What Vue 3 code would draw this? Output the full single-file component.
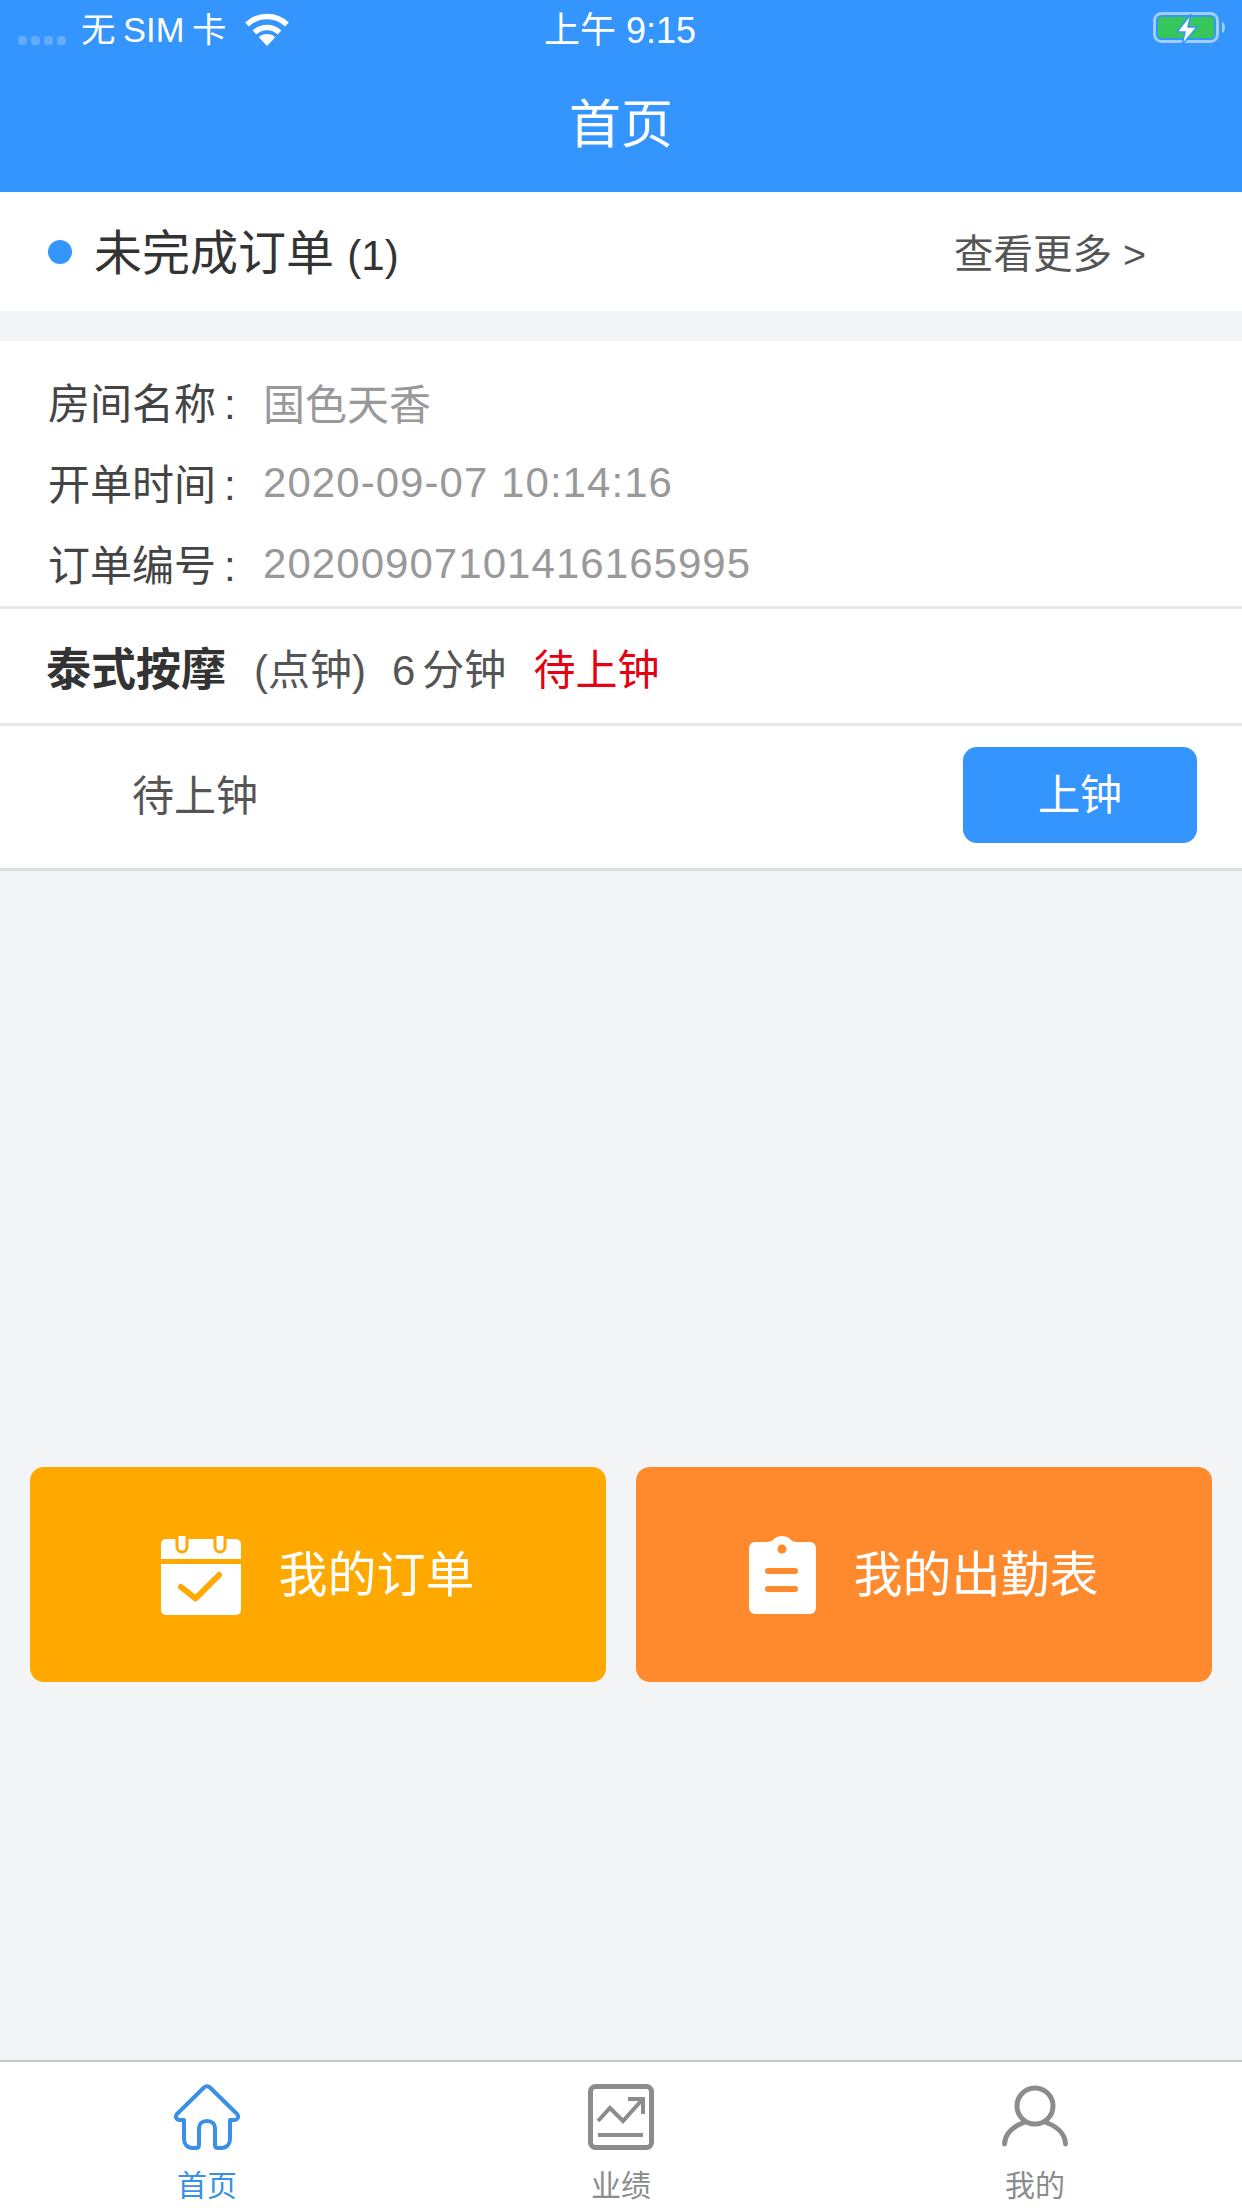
<template>
  <div class="page">
    <header class="top">
      <div class="status">
        <div class="status-left">
          <span class="dots"><i></i><i></i><i></i><i></i></span>
          <span class="carrier">无 SIM 卡</span>
          <svg class="wifi" width="46" height="33" viewBox="0 0 46 33">
            <path d="M23 33 14.800 24.200a12 12 0 0 1 16.400 0Z" fill="#fff"/>
            <path d="M10.500 19.500a18 18 0 0 1 25 0" fill="none" stroke="#fff" stroke-width="5.500"/>
            <path d="M3 11.500a29 29 0 0 1 40 0" fill="none" stroke="#fff" stroke-width="5.500"/>
          </svg>
        </div>
        <span class="clock">上午 9:15</span>
        <svg class="battery" width="74" height="34" viewBox="0 0 74 34">
          <rect x="1.500" y="1.500" width="63" height="28" rx="7" fill="none" stroke="#9fceff" stroke-width="3"/>
          <rect x="5" y="5" width="56" height="21" rx="3" fill="#35c759"/>
          <path d="M69 10c4 1 4 10 0 11Z" fill="#9fceff"/>
          <path d="M38 2 24 20h8l-3 13 15-18h-9l3-13Z" fill="#fff" stroke="#3395fd" stroke-width="1.500"/>
        </svg>
      </div>
      <h1 class="title">首页</h1>
    </header>

    <section class="pending">
      <div class="pending-name"><i class="dot"></i><span class="pending-text">未完成订单 <span class="count">(1)</span></span></div>
      <span class="more">查看更多 &gt;</span>
    </section>

    <section class="info">
      <div class="info-row" v-for="r in rows" :key="r.label">
        <span class="label">{{ r.label }}<span class="colon">:</span></span>
        <span class="value" :class="{ num: r.num }">{{ r.value }}</span>
      </div>
    </section>

    <section class="service">
      <b class="svc-name">泰式按摩</b>
      <span class="svc-type">(点钟)</span>
      <span class="svc-time"><span class="svc-six">6</span>分钟</span>
      <span class="svc-state">待上钟</span>
    </section>

    <section class="action">
      <span class="action-text">待上钟</span>
      <button class="action-btn">上钟</button>
    </section>

    <main class="body">
      <div class="shortcut yellow">
        <svg width="80" height="80" viewBox="0 0 80 80">
          <path d="M5 4h70a5 5 0 0 1 5 5v15H0V9a5 5 0 0 1 5-5Z" fill="#fff"/>
          <path d="M0 29h80v46a5 5 0 0 1-5 5H5a5 5 0 0 1-5-5Z" fill="#fff"/>
          <path d="M16 1v11a5 5 0 0 0 10 0V1M54 1v11a5 5 0 0 0 10 0V1" fill="#fff" stroke="#ffa800" stroke-width="3"/>
          <path d="M20 52 34.500 63.500 58 40" fill="none" stroke="#ffa800" stroke-width="6" stroke-linecap="round" stroke-linejoin="round"/>
        </svg>
        <span class="shortcut-text">我的订单</span>
      </div>
      <div class="shortcut orange">
        <svg width="67" height="78" viewBox="0 0 67 78">
          <path d="M6 6h12c3 0 5-1 7-3 2-2 5-3 8-3s6 1 8 3c2 2 4 3 7 3h13a6 6 0 0 1 6 6v60a6 6 0 0 1-6 6H6a6 6 0 0 1-6-6V12a6 6 0 0 1 6-6Z" fill="#fff"/>
          <circle cx="33" cy="13" r="4.500" fill="#ff8a2d"/>
          <rect x="16" y="32" width="33" height="6" rx="3" fill="#ff8a2d"/>
          <rect x="16" y="50" width="33" height="6" rx="3" fill="#ff8a2d"/>
        </svg>
        <span class="shortcut-text">我的出勤表</span>
      </div>
    </main>

    <nav class="tabs">
      <div class="tab active">
        <svg width="68" height="66" viewBox="0 0 68 66">
          <path d="M31 3.500a4 4 0 0 1 6 0L64 30c2.500 3 .5 6-3 6h-4v19c0 5-3 9-9 9h-3c-2 0-3-1-3-3V44c0-4-3-7-8-7s-8 3-8 7v17c0 2-1 3-3 3h-3c-6 0-9-4-9-9V36H7c-3.500 0-5.500-3-3-6Z" fill="none" stroke="#3a8fe6" stroke-width="4" stroke-linejoin="round"/>
        </svg>
        <span>首页</span>
      </div>
      <div class="tab">
        <svg width="68" height="66" viewBox="0 0 68 66">
          <rect x="3.500" y="2.500" width="61" height="61" rx="5" fill="none" stroke="#8c8c8c" stroke-width="5"/>
          <path d="M11 37 23 24 36 37 54 17" fill="none" stroke="#8c8c8c" stroke-width="4"/>
          <path d="M41 15h15v15" fill="none" stroke="#8c8c8c" stroke-width="4"/>
          <path d="M11 51h45" stroke="#8c8c8c" stroke-width="4"/>
        </svg>
        <span>业绩</span>
      </div>
      <div class="tab">
        <svg width="68" height="66" viewBox="0 0 68 66">
          <circle cx="34" cy="22" r="18" fill="none" stroke="#8c8c8c" stroke-width="5"/>
          <path d="M3.500 60C4 49 13 42 23 38.500M45 38.500C55 42 64 49 64.500 60" fill="none" stroke="#8c8c8c" stroke-width="5" stroke-linecap="round"/>
        </svg>
        <span>我的</span>
      </div>
    </nav>
  </div>
</template>

<script setup>
const rows = [
  { label: '房间名称', value: '国色天香' },
  { label: '开单时间', value: '2020-09-07 10:14:16', num: true },
  { label: '订单编号', value: '20200907101416165995', num: true }
]
</script>

<style>
html, body { margin: 0; background: #f3f4f6; }
</style>

<style scoped>
.page {
  width: 1242px;
  height: 2208px;
  display: flex;
  flex-direction: column;
  background: #f3f4f6;
  font-family: "Liberation Sans", "Noto Sans CJK SC", sans-serif;
  color: #333;
  overflow: hidden;
}
.top { height: 192px; background: #3395fd; color: #fff; }
.status {
  height: 58px;
  display: grid;
  grid-template-columns: 1fr auto 1fr;
  align-items: center;
  padding: 0 15px 0 18px;
}
.status-left { display: flex; align-items: center; }
.dots { display: flex; gap: 4px; margin-top: 22px; }
.dots i { width: 9px; height: 9px; border-radius: 40%; background: #63acfd; }
.carrier { font-size: 34.500px; margin-left: 15px; word-spacing: -2px; padding-bottom: 5px; }
.wifi { margin-left: 17px; }
.clock { font-size: 36px; padding-bottom: 4px; margin-right: 5px; }
.battery { justify-self: end; }
.title { margin: 32px 0 0; text-align: center; font-size: 52px; line-height: 70px; font-weight: 400; }

.pending {
  height: 119px;
  background: #fff;
  display: flex;
  align-items: center;
  justify-content: space-between;
  padding: 0 96px 0 48px;
  margin-bottom: 30px;
}
.pending-name { display: flex; align-items: center; font-size: 48px; }
.pending-text { padding-bottom: 6px; }
.count { font-size: 42px; }
.dot { width: 24px; height: 24px; border-radius: 50%; background: #3395fd; margin-right: 22px; }
.more { font-size: 39.500px; color: #555; padding-bottom: 2px; }

.info {
  height: 268px;
  background: #fff;
  border-bottom: 3px solid #e8e8e8;
  box-sizing: border-box;
  padding: 20px 48px 0;
}
.info-row { height: 81px; display: flex; align-items: center; font-size: 42px; }
.label { color: #444; width: 215px; padding-bottom: 3px; }
.colon { margin-left: 8px; }
.value { color: #999; }
.num { letter-spacing: 1.050px; }

.service {
  height: 117px;
  background: #fff;
  border-bottom: 3px solid #e8e8e8;
  box-sizing: border-box;
  display: flex;
  align-items: center;
  padding: 0 46px;
  font-size: 42px;
  color: #555;
}
.svc-name { font-size: 45px; color: #333; margin-right: 28px; }
.svc-time { margin-left: 26px; }
.svc-six { margin-right: 7px; }
.svc-state { color: #e60012; margin-left: 27px; }

.action {
  height: 145px;
  background: #fff;
  border-bottom: 3px solid #dcdcdc;
  box-sizing: border-box;
  display: flex;
  align-items: center;
  justify-content: space-between;
  padding: 0 45px 0 132px;
}
.action-text { font-size: 42px; color: #555; padding-bottom: 9px; }
.action-btn {
  width: 234px;
  height: 96px;
  margin-bottom: 4px;
  padding: 0 0 8px;
  border: 0;
  border-radius: 14px;
  background: #3395fd;
  color: #fff;
  font: inherit;
  font-size: 42px;
}

.body {
  flex: 1;
  display: flex;
  align-items: flex-start;
  gap: 30px;
  padding: 596px 30px 0;
}
.shortcut {
  flex: 1;
  height: 215px;
  border-radius: 14px;
  color: #fff;
  font-size: 49px;
  display: flex;
  align-items: center;
  justify-content: center;
  gap: 37px;
}
.shortcut-text { padding-bottom: 8px; }
.yellow { background: #ffa800; }
.orange { background: #ff8a2d; }

.tabs {
  height: 148px;
  background: #fff;
  border-top: 2px solid #c8c8c8;
  box-sizing: border-box;
  display: grid;
  grid-template-columns: repeat(3, 1fr);
}
.tab {
  display: flex;
  flex-direction: column;
  align-items: center;
  padding-top: 22px;
  font-size: 30px;
  color: #8c8c8c;
}
.tab span { margin-top: 16px; line-height: 40px; }
.tab.active { color: #3a8fe6; }
</style>
